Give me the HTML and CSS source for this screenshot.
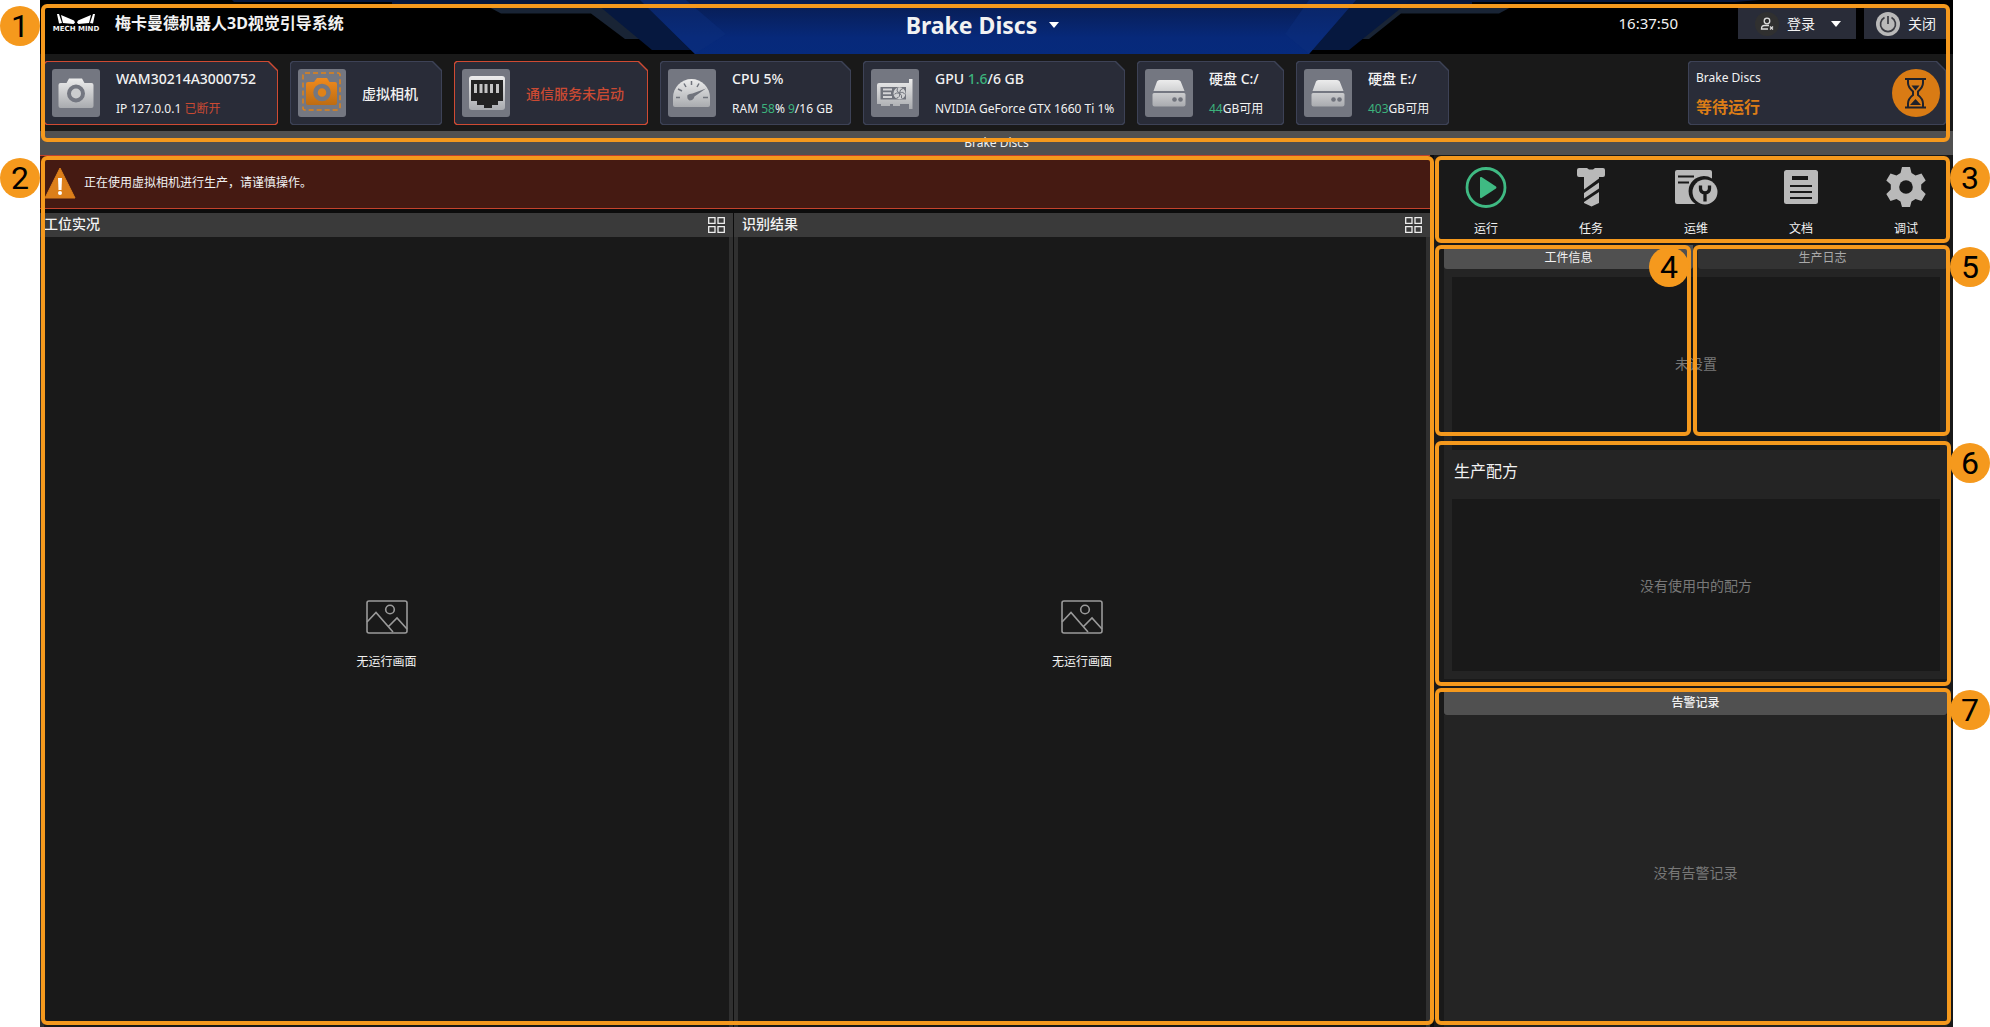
FILE: index.html
```html
<!DOCTYPE html>
<html lang="zh-CN">
<head>
<meta charset="utf-8">
<title>梅卡曼德机器人3D视觉引导系统</title>
<link rel="stylesheet" href="styles.css">
</head>
<body>
<svg width="0" height="0" class="defs" aria-hidden="true">
  <defs>
    <linearGradient id="silver" x1="0" y1="0" x2="0" y2="1"><stop offset="0" stop-color="#ececec"/><stop offset="1" stop-color="#a9abaf"/></linearGradient>
    <linearGradient id="amber" x1="0" y1="0" x2="0" y2="1"><stop offset="0" stop-color="#f08a1c"/><stop offset="1" stop-color="#bd6c12"/></linearGradient>
    <linearGradient id="royal" x1="0" y1="0" x2="0" y2="1"><stop offset="0" stop-color="#081c50"/><stop offset=".7" stop-color="#07297a"/><stop offset="1" stop-color="#062a7c"/></linearGradient>
    <symbol id="disk" viewBox="0 0 48 48"><path d="M14.500 11h18.500q2 0 2.700 1.600L39.500 22h-31l3.500-9.400Q12.700 11 14.500 11zM9 24h30q1.500 0 1.500 1.500v10q0 2-2 2h-29q-2 0-2-2v-10Q7.500 24 9 24z" fill="url(#silver)"/><circle cx="29.500" cy="30.500" r="2.300" fill="#70737c"/><circle cx="35.500" cy="30.500" r="2.300" fill="#70737c"/></symbol>
    <symbol id="grid" viewBox="0 0 17 16"><path d="M.700.700h6.300v5.600H.700zM10 .700h6.300v5.600H10zM.700 9.700h6.300v5.600H.700zM10 9.700h6.300v5.600H10z" fill="none" stroke="#eee" stroke-width="1.300"/></symbol>
    <symbol id="picture" viewBox="0 0 42 34"><g fill="none" stroke="#9a9a9a" stroke-width="1.600"><rect x="1" y="1" width="40" height="32" rx="2"/><circle cx="24" cy="9.500" r="4.300"/><path d="M1 22l9-9.500L27 32M22 27l9-9 10 11"/></g></symbol>
  </defs>
</svg>

<div class="app">
  <div class="top">
    <header class="header">
      <svg class="header-art" width="1528" height="54" viewBox="0 0 1528 54" aria-hidden="true">
        <path d="M0 0h1528l-25 2H1240v2H160V2H2z" fill="#07173c"/>
        <path d="M255 6l14 7.500h90L393 39h65V6zM1251 6h30l-14 7.500h-98L1137 39h-60V6z" fill="#192435"/>
        <path d="M360 0l60 50h45V0zM1179 0l-62 50h-45V0z" fill="#06183f"/>
        <path d="M408 0h716l-47 54H463z" fill="url(#royal)"/>
        <path d="M408 0h46l40 34-31 20zM1124 0h-47l-24 34 24 20z" fill="#0c2e7c" opacity=".5"/>
      </svg>
      <div class="brand">
        <div class="logo">
          <svg width="38" height="12" viewBox="0 0 38 12" aria-hidden="true"><path d="M0 1h2l3 9-3 .500zM4 2l13 5.500 1 2L16.500 11 6 10zM38 1h-2l-3 9 3 .500zM34 2L21 7.500l-1 2 1.500 1.500L32 10z" fill="#fff"/></svg>
          <span class="logo-name">MECH MIND</span>
        </div>
        <h1 class="system-name">梅卡曼德机器人3D视觉引导系统</h1>
      </div>
      <button class="project" type="button">Brake Discs <svg width="10" height="6" viewBox="0 0 10 6"><path d="M0 0h10L5 6z" fill="#fff"/></svg></button>
      <div class="session">
        <time class="clock">16:37:50</time>
        <button class="head-btn login" type="button">
          <svg width="24" height="24" viewBox="0 0 24 24"><circle cx="12" cy="12" r="12" fill="#303030"/><g fill="none" stroke="#ddd" stroke-width="1.300"><circle cx="12" cy="9" r="2.800"/><path d="M14 13.500H9.500q-3 0-3 3.500h6.500M15 14.500l3 3M18 14.500l-3 3"/></g></svg>
          登录
          <svg class="caret" width="10" height="6" viewBox="0 0 10 6"><path d="M0 0h10L5 6z" fill="#fff"/></svg>
        </button>
        <button class="head-btn close" type="button">
          <svg width="24" height="24" viewBox="0 0 24 24"><circle cx="12" cy="12" r="12" fill="#b9b9b9"/><path d="M8.500 5.500a7.500 7.500 0 1 0 7 0M12 4v8" fill="none" stroke="#3a3b42" stroke-width="1.700"/></svg>
          关闭
        </button>
      </div>
    </header>

    <section class="status">
      <article class="card card-camera alert">
        <svg class="tile" viewBox="0 0 48 48"><path d="M17 9.500h13l2.500 4.500h7q2 0 2 2v21q0 2-2 2h-31q-2 0-2-2V16q0-2 2-2h6z" fill="url(#silver)"/><circle cx="24" cy="24.500" r="7" fill="#cbccce" stroke="#747781" stroke-width="4"/></svg>
        <div class="info"><strong>WAM30214A3000752</strong><span>IP 127.0.0.1 <em class="bad">已断开</em></span></div>
      </article>
      <article class="card card-virtual">
        <svg class="tile" viewBox="0 0 48 48"><rect x="5" y="4" width="37" height="37" rx="2" fill="none" stroke="#e08217" stroke-width="1.500" stroke-dasharray="5 3"/><path d="M19 9h10l2.500 4H37q2 0 2 2v19q0 2-2 2H10q-2 0-2-2V15q0-2 2-2h6z" fill="url(#amber)"/><circle cx="24" cy="23.500" r="6.500" fill="#e08217" stroke="#747781" stroke-width="4.500"/></svg>
        <div class="info"><strong>虚拟相机</strong></div>
      </article>
      <article class="card card-comm alert">
        <svg class="tile" viewBox="0 0 48 48"><rect x="7" y="7" width="36" height="34" rx="3" fill="url(#silver)"/><path d="M9 11h32v21h-5v4h-6v3h-8v-3h-7v-4H9z" fill="#222"/><path d="M12 15h3v9h-3zM17.500 15h3v9h-3zM22.500 15h3v9h-3zM28 15h3v9h-3zM34 15h3v9h-3z" fill="#c4c4c4"/></svg>
        <div class="info"><strong class="bad">通信服务未启动</strong></div>
      </article>
      <article class="card card-cpu">
        <svg class="tile" viewBox="0 0 48 48"><path d="M5 28.500a18.500 18.500 0 0 1 37 0V36q0 2-2 2H7q-2 0-2-2z" fill="url(#silver)"/><path d="M8 28.500h4M35 28.500h5M10 20l4 2M16 14.500l2 3.500M23.500 12v4M31 14.500l-2 3.500" stroke="#70737c" stroke-width="1.500"/><path d="M19.500 26q2-1.500 5-1.500L38 19.500l-11.500 8q-1 4-5 4-3-1.500-2-5.500z" fill="#70737c"/></svg>
        <div class="info"><strong>CPU 5%</strong><span>RAM <em class="good">58</em>% <em class="good">9</em>/16 GB</span></div>
      </article>
      <article class="card card-gpu">
        <svg class="tile" viewBox="0 0 48 48"><path d="M8 14h30v-4h3.500v30H38v-5H29v2h-7v-2h-3v2H10v-2H6V16q0-2 2-2z" fill="url(#silver)"/><path d="M9.500 18H35v12.500H9.500z" fill="#70737c"/><path d="M12 20.500h9M12 24.200h8M12 28h9" stroke="#d4d4d6" stroke-width="2"/><circle cx="28.500" cy="24.200" r="6" fill="#cfd0d2"/><path d="M28.500 24.200q-4-2-2-5M28.500 24.200q4-2 5 1M28.500 24.200q1 4-3 5M28.500 24.200q0-4 4-5M28.500 24.200q-3-1-5 1M28.500 24.200q3 2 2 5" fill="none" stroke="#70737c" stroke-width="1"/></svg>
        <div class="info"><strong>GPU <em class="good">1.6</em>/6 GB</strong><span>NVIDIA GeForce GTX 1660 Ti 1%</span></div>
      </article>
      <article class="card card-disk">
        <svg class="tile" viewBox="0 0 48 48"><use href="#disk"/></svg>
        <div class="info"><strong>硬盘 C:/</strong><span><em class="good">44</em>GB可用</span></div>
      </article>
      <article class="card card-disk">
        <svg class="tile" viewBox="0 0 48 48"><use href="#disk"/></svg>
        <div class="info"><strong>硬盘 E:/</strong><span><em class="good">403</em>GB可用</span></div>
      </article>
      <article class="card card-run">
        <div class="info"><span>Brake Discs</span><b class="waiting">等待运行</b></div>
        <svg width="48" height="48" viewBox="0 0 48 48"><circle cx="24" cy="24" r="24" fill="#d97b14"/><g fill="none" stroke="#20222b" stroke-width="2"><path d="M13 10h21M13 38.500h21M16 10v4q0 4 5 8.500v3.500q-5 4-5 8.500v4M31 10v4q0 4-5 8.500v3.500q5 4 5 8.500v4"/></g><path d="M19.500 16.500h8l-4 5zM18 36l5.500-6 5.500 6z" fill="#20222b"/></svg>
      </article>
    </section>

    <div class="project-bar">Brake Discs</div>
    <div class="callout callout-top"><span class="badge badge-left">1</span></div>
  </div>

  <main class="main">
    <section class="stage">
      <div class="banner">
        <svg width="32" height="32" viewBox="0 0 32 32"><path d="M16 1l15 30H1z" fill="#dc7f1a" stroke="#dc7f1a" stroke-linejoin="round"/><path d="M14 11h4l-.500 12h-3z" fill="#fff"/><circle cx="16" cy="26" r="2" fill="#fff"/></svg>
        正在使用虚拟相机进行生产，请谨慎操作。
      </div>
      <div class="views">
        <section class="view">
          <div class="view-head"><h2>工位实况</h2><button type="button" aria-label="布局"><svg width="17" height="16"><use href="#grid"/></svg></button></div>
          <div class="view-body"><svg width="42" height="34"><use href="#picture"/></svg>无运行画面</div>
        </section>
        <section class="view">
          <div class="view-head view-head-inset"><h2>识别结果</h2><button type="button" aria-label="布局"><svg width="17" height="16"><use href="#grid"/></svg></button></div>
          <div class="view-body"><svg width="42" height="34"><use href="#picture"/></svg>无运行画面</div>
        </section>
      </div>
      <div class="callout callout-stage"><span class="badge badge-left">2</span></div>
    </section>

    <aside class="side">
      <nav class="tools">
        <button type="button"><svg width="44" height="44" viewBox="0 0 44 44"><circle cx="22" cy="21.500" r="19" fill="none" stroke="#3fba83" stroke-width="2.800"/><path d="M16 12q0-1.500 1.500-1l14.500 9.500q1 1 0 2L17.500 32q-1.500.500-1.500-1z" fill="#3fba83"/></svg>运行</button>
        <button type="button"><svg width="44" height="44" viewBox="0 0 44 44"><g fill="#b9b9b9"><path d="M8 4q0-2 2-2h8l2 1.500h4L26 2h8q2 0 2 2v5q0 2-2 2h-4v1.500L15 23.500V11h-5q-2 0-2-2z"/><path d="M15 27l15-10.500v6L15 32.500zM15 36l15-10v11l-7.500 3.500L15 37z"/></g></svg>任务</button>
        <button type="button"><svg width="44" height="44" viewBox="0 0 44 44"><path d="M3 4h33q2 0 2 2v6.500a15 15 0 0 0-16.500 25.500H3q-2 0-2-2V6q0-2 2-2z" fill="#b9b9b9"/><path d="M4 10.500h16M4 16.500h11" stroke="#191919" stroke-width="2"/><circle cx="31" cy="26" r="12.500" fill="#b9b9b9"/><path d="M26.500 19.500v3q0 4 4.500 4.500 4.500-.500 4.500-4.500v-3M31 26v9.500" fill="none" stroke="#191919" stroke-width="3.300"/></svg>运维</button>
        <button type="button"><svg width="44" height="44" viewBox="0 0 44 44"><rect x="5" y="4" width="34" height="34" rx="2.500" fill="#b9b9b9"/><path d="M13 12h16" stroke="#191919" stroke-width="4"/><path d="M11 20h22M11 26h22M11 32h22" stroke="#191919" stroke-width="1.800"/></svg>文档</button>
        <button type="button"><svg width="44" height="44" viewBox="0 0 44 44"><path d="M18 1h8l1.500 6 4 2.400 6-2 4.200 7-4.500 4.200v5L41.700 28l-4.200 7-6-2-4 2.400L26 41h-8l-1.500-5.600-4-2.400-6 2-4.200-7 4.500-4.400v-5l-4.500-4.200 4.200-7 6 2 4-2.400z" fill="#b9b9b9"/><circle cx="22" cy="21" r="6.800" fill="#191919"/></svg>调试</button>
        <div class="callout callout-tools"><span class="badge badge-right">3</span></div>
      </nav>

      <section class="info-panel">
        <div class="tabs"><button class="tab active" type="button">工件信息</button><button class="tab" type="button">生产日志</button></div>
        <div class="tab-body"><div class="well">未设置</div></div>
        <div class="callout callout-workpiece"><span class="badge badge-inner">4</span></div>
        <div class="callout callout-log"><span class="badge badge-right">5</span></div>
      </section>

      <section class="recipe">
        <h2>生产配方</h2>
        <div class="well">没有使用中的配方</div>
        <div class="callout callout-recipe"><span class="badge badge-far">6</span></div>
      </section>

      <section class="alarms">
        <h2>告警记录</h2>
        <div class="alarms-body">没有告警记录</div>
        <div class="callout callout-alarms"><span class="badge badge-far">7</span></div>
      </section>
    </aside>
  </main>
</div>
</body>
</html>
```
FILE: styles.css
```css
* { box-sizing: border-box; }

body {
  margin: 0;
  background: #fff;
  color: #f2f2f2;
  font: 12px/20px "Noto Sans", "Noto Sans CJK SC", sans-serif;
}

h1, h2 { margin: 0; font-weight: 500; }
em { font-style: normal; }
svg { display: block; flex: none; }
.defs { position: absolute; }

button {
  border: 0;
  padding: 0;
  background: none;
  color: inherit;
  font: inherit;
}

.app {
  display: flex;
  flex-direction: column;
  min-height: 100vh;
  margin: 0 37px 0 40px;
  background: #191919;
}

/* Header */
.top { position: relative; }

.header {
  position: relative;
  display: grid;
  grid-template-columns: 1fr auto 1fr;
  height: 54px;
  background: #000;
  overflow: hidden;
}

.header-art {
  position: absolute;
  top: 0;
  left: 50%;
  margin-left: -765px;
}

.brand, .project, .session { position: relative; }

.brand {
  display: flex;
  align-items: flex-start;
  gap: 14px;
  padding: 13px 0 0 11px;
}

.logo {
  display: flex;
  flex-direction: column;
  align-items: center;
  width: 50px;
}

.logo-name {
  font: bold 7px/8px "DejaVu Sans", sans-serif;
  white-space: nowrap;
}

.system-name { font-size: 16px; line-height: 20px; font-weight: 700; }

.project {
  display: flex;
  align-items: center;
  gap: 12px;
  height: 50px;
  padding-right: 28px;
  font-size: 23px;
  font-weight: 700;
}

.session {
  display: flex;
  justify-content: flex-end;
  align-items: flex-start;
  gap: 8px;
  padding: 8px 6px 0 0;
}

.clock { margin-right: 52px; font-size: 15px; line-height: 31px; }

.head-btn {
  display: flex;
  align-items: center;
  gap: 8px;
  height: 31px;
  background: #292c38;
  font-size: 14px;
}

.login { width: 118px; padding-left: 17px; }
.login .caret { margin-left: 8px; }
.close { width: 83px; padding-left: 12px; }

/* Status cards */
.status {
  display: flex;
  gap: 12px;
  height: 77px;
  padding: 7px 7px 6px 4px;
}

.card {
  --edge: #3d4256;
  position: relative;
  display: flex;
  align-items: center;
  gap: 16px;
  flex: none;
  height: 64px;
  padding: 0 8px;
  background: var(--edge);
  z-index: 0;
}

.card, .card::before {
  clip-path: polygon(2px 0, calc(100% - 9px) 0, 100% 9px, 100% calc(100% - 2px), calc(100% - 2px) 100%, 2px 100%, 0 calc(100% - 2px), 0 2px);
}

.card::before {
  content: "";
  position: absolute;
  inset: 1px;
  background: #292c38;
  z-index: -1;
}

.alert { --edge: #cf4a33; }
.card-camera { width: 234px; }
.card-virtual { width: 152px; }
.card-comm { width: 194px; }
.card-cpu { width: 191px; }
.card-gpu { width: 262px; }
.card-disk { width: 147px; }
.card-disk + .card-disk { width: 153px; }

.tile { width: 48px; height: 48px; border-radius: 3px; background: #747781; }

.info {
  display: flex;
  flex-direction: column;
  gap: 10px;
  padding-top: 2px;
  white-space: nowrap;
}

.card-run {
  width: 258px;
  margin-left: auto;
  padding-right: 6px;
  justify-content: space-between;
}

.card-run .info { gap: 9px; padding: 0 0 2px; }

.info strong { font-size: 14px; font-weight: 500; }
.bad { color: #cb4a33; }
.good { color: #3cb27c; }
.waiting { color: #dc7d16; font-size: 16px; }

.project-bar {
  height: 24px;
  background: #505050;
  line-height: 24px;
  text-align: center;
}

/* Main area */
.main {
  display: grid;
  flex: 1;
  grid-template-columns: minmax(0, 1390fr) minmax(0, 519fr);
  gap: 4px;
  background: #0c0c0c;
}

.stage {
  position: relative;
  display: flex;
  flex-direction: column;
  gap: 4px;
}

.banner {
  display: flex;
  align-items: center;
  gap: 8px;
  height: 54px;
  padding: 2px 0 0 4px;
  border: solid #c3422c;
  border-width: 1px 0;
  background: #451a12;
}

.views {
  display: grid;
  flex: 1;
  grid-template-columns: minmax(0, 693fr) minmax(0, 696fr);
  gap: 1px;
}

.view { display: flex; flex-direction: column; }

.view-head {
  display: flex;
  align-items: center;
  justify-content: space-between;
  height: 24px;
  padding: 0 8px 0 4px;
  background: #3a3a3a;
}

.view-head-inset { padding-left: 8px; }
.view-head h2 { padding-bottom: 2px; font-size: 14px; }

.view-body {
  display: flex;
  flex: 1;
  flex-direction: column;
  align-items: center;
  justify-content: center;
  gap: 18px;
  padding-top: 8px;
  border: solid #303030;
  border-width: 0 4px;
  background: #191919;
}

/* Side column */
.side {
  display: flex;
  flex-direction: column;
  background: #191919;
}

.tools {
  position: relative;
  display: flex;
  justify-content: space-between;
  height: 90px;
  padding: 11px 7px 0 12px;
}

.tools button {
  display: flex;
  flex-direction: column;
  align-items: center;
  gap: 9px;
  width: 80px;
}

.info-panel, .recipe, .alarms { position: relative; padding: 0 6px 0 10px; }

.tabs { display: grid; grid-template-columns: 1fr 1fr; gap: 5px; }

.tab {
  height: 24px;
  padding-top: 1px;
  border-radius: 0 0 3px 3px;
  background: #333;
  color: #aaa;
}

.tab.active { background: #505050; color: #f2f2f2; }
.tabs, .tab-body { background: #242424; }
.tab-body { padding: 8px 7px 0 8px; }

.well {
  display: flex;
  align-items: center;
  justify-content: center;
  height: 173px;
  background: #191919;
  color: #787878;
  font-size: 14px;
}

.recipe { margin-bottom: 9px; }

.recipe h2 {
  padding: 5px 10px 12px;
  background: #242424;
  font-size: 16px;
  font-weight: 400;
  line-height: 32px;
}

.recipe .well {
  box-sizing: border-box;
  height: 180px;
  padding-top: 2px;
  border: solid #242424;
  border-width: 0 7px 8px 8px;
}

.alarms { display: flex; flex: 1; flex-direction: column; }

.alarms h2 {
  height: 27px;
  padding-top: 5px;
  border-radius: 0 0 3px 3px;
  background: #505050;
  font-size: 12px;
  text-align: center;
}

.alarms-body {
  display: flex;
  flex: 1;
  align-items: center;
  justify-content: center;
  padding-top: 4px;
  background: #242424;
  color: #787878;
  font-size: 14px;
}

/* Numbered callouts drawn over the regions */
.callout {
  position: absolute;
  z-index: 2;
  border: 4px solid #f5991d;
  border-radius: 6px;
  pointer-events: none;
}

.callout-top { inset: 4px 3px 13px 1px; }
.callout-stage { inset: 1px -4px 2px 1px; }
.callout-tools { inset: 1px 3px 2px 1px; }
.callout-workpiece { inset: 0 262px 14px 1px; }
.callout-log { inset: 0 3px 14px 259px; }
.callout-recipe { inset: -9px 2px -7px 1px; }
.callout-alarms { inset: 0 2px 2px 1px; }

.badge {
  position: absolute;
  top: -2px;
  width: 40px;
  height: 40px;
  border-radius: 50%;
  background: #f5991d;
  color: #000;
  font: 32px/40px Roboto, sans-serif;
  text-align: center;
}

.badge-left { left: -45px; }
.badge-right { right: -44px; }
.badge-far { right: -43px; }
.badge-inner { right: -2px; }
```
